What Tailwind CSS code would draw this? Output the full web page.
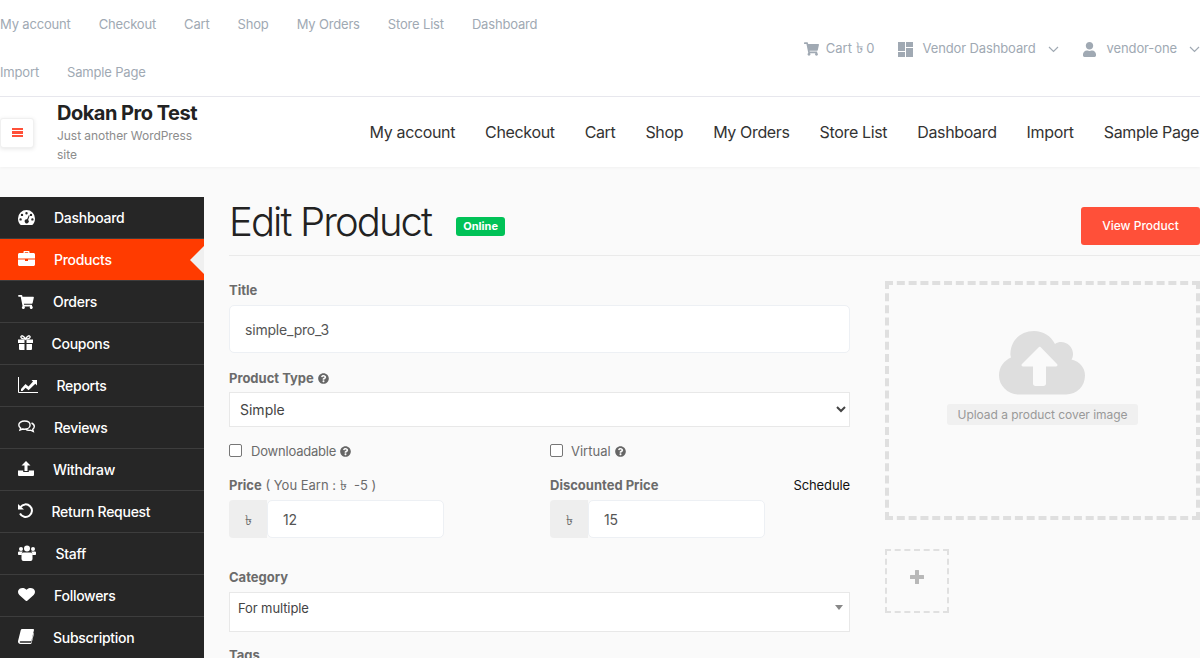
<!DOCTYPE html>
<html lang="en">
<head>
<meta charset="utf-8">
<title>Edit Product</title>
<script src="https://cdn.jsdelivr.net/npm/@tailwindcss/browser@4"></script>
</head>
<body class="bg-[#fafafa] font-['Inter','Noto_Sans',sans-serif] overflow-hidden">
<div class="w-[1200px] h-[658px] overflow-hidden flex flex-col">
  <!-- top bar -->
  <div class="h-[97px] shrink-0 bg-white border-b border-[#e8e8ee] flex items-center justify-between text-[13px] text-[#a0a9b3]">
    <div class="w-[600px] flex flex-wrap gap-x-[28px] tracking-[-0.17px]">
      <a class="h-[48px] leading-[48px]">My account</a><a class="h-[48px] leading-[48px]">Checkout</a><a class="h-[48px] leading-[48px]">Cart</a><a class="h-[48px] leading-[48px]">Shop</a><a class="h-[48px] leading-[48px]">My Orders</a><a class="h-[48px] leading-[48px]">Store List</a><a class="h-[48px] leading-[48px]">Dashboard</a>
      <div class="basis-full h-0"></div>
      <a class="h-[48px] leading-[48px]">Import</a><a class="h-[48px] leading-[48px]">Sample Page</a>
    </div>
    <div class="flex items-center h-[20px] mt-[2px] whitespace-nowrap">
      <svg class="w-[15px] h-[14px] mr-[7px] fill-[#a0a9b3]" viewBox="0 0 576 512"><path d="M528.12 301.319l47.273-208C578.806 78.301 567.391 64 551.99 64H159.208l-9.166-44.81C147.758 8.021 137.93 0 126.529 0H24C10.745 0 0 10.745 0 24v16c0 13.255 10.745 24 24 24h69.883l70.248 343.435C147.325 417.1 136 435.222 136 456c0 30.928 25.072 56 56 56s56-25.072 56-56c0-15.674-6.447-29.835-16.824-40h209.647C430.447 426.165 424 440.326 424 456c0 30.928 25.072 56 56 56s56-25.072 56-56c0-22.172-12.888-41.332-31.579-50.405l5.517-24.276c3.413-15.018-8.002-29.319-23.403-29.319H218.117l-6.545-32h293.145c11.206 0 20.92-7.754 23.403-18.681z"/></svg>
      <span>Cart <span class="text-[15px] leading-[15px]">৳</span> 0</span>
      <svg class="w-[15px] h-[15px] ml-[23px] mr-[10px] fill-[#a0a9b3]" viewBox="0 0 15 15"><rect width="7" height="9"/><rect x="8" width="7" height="5"/><rect y="10" width="7" height="5"/><rect x="8" y="6" width="7" height="9"/></svg>
      <span class="tracking-[-0.12px]">Vendor Dashboard</span>
      <svg class="w-[11px] h-[7px] ml-[12px] stroke-[#a0a9b3] fill-none" viewBox="0 0 11 7"><path d="M1 1l4.500 4.500L10 1" stroke-width="1.2"/></svg>
      <svg class="w-[13px] h-[15px] ml-[24px] mr-[11px] fill-[#a0a9b3]" viewBox="0 0 448 512"><path d="M224 256c70.7 0 128-57.3 128-128S294.7 0 224 0 96 57.3 96 128s57.3 128 128 128zm89.6 32h-16.7c-22.2 10.2-46.9 16-72.9 16s-50.6-5.8-72.9-16h-16.7C60.2 288 0 348.2 0 422.4V464c0 26.5 21.5 48 48 48h352c26.5 0 48-21.5 48-48v-41.6c0-74.2-60.2-134.4-134.4-134.4z"/></svg>
      <span class="tracking-[-0.1px]">vendor-one</span>
      <svg class="w-[11px] h-[7px] ml-[12px] stroke-[#a0a9b3] fill-none" viewBox="0 0 11 7"><path d="M1 1l4.500 4.500L10 1" stroke-width="1.2"/></svg>
    </div>
  </div>
  <!-- site header -->
  <div class="h-[70px] shrink-0 bg-white flex items-center shadow-[0_1px_3px_rgba(0,0,0,0.04)]">
    <button class="w-[34px] h-[30px] ml-0 mt-[1px] bg-white rounded-[3px] border border-[#f0f0f0] shadow-[0_1px_4px_rgba(0,0,0,0.1)] flex flex-col items-center justify-center gap-[1px]">
      <span class="block w-[11px] h-[2.5px] bg-[#ff5039]"></span><span class="block w-[11px] h-[2.5px] bg-[#ff5039]"></span><span class="block w-[11px] h-[2.5px] bg-[#ff5039]"></span>
    </button>
    <div class="ml-[23px] w-[150px]">
      <div class="text-[20px] leading-[24px] font-bold text-[#222] whitespace-nowrap tracking-[-0.5px]">Dokan Pro Test</div>
      <div class="text-[12px] leading-[19px] mt-[1px] text-[#8c8c8c] tracking-[-0.05px]">Just another WordPress site</div>
    </div>
    <nav class="ml-auto flex gap-x-[30px] text-[16px] text-[#333] whitespace-nowrap pr-[1px] tracking-[-0.35px]">
      <a>My account</a><a>Checkout</a><a>Cart</a><a>Shop</a><a>My Orders</a><a>Store List</a><a>Dashboard</a><a>Import</a><a>Sample Page</a>
    </nav>
  </div>
  <!-- body -->
  <div class="flex pt-[30px] flex-1 min-h-0">
    <!-- sidebar -->
    <aside class="w-[204px] shrink-0 bg-[#262626] text-white text-[14px] font-medium tracking-[-0.28px]">
      <a class="h-[42px] flex items-center pl-[18px] border-b border-[#3d3d3d]">
        <svg class="w-[17px] h-[15px] fill-white mr-[19px] shrink-0" viewBox="0 0 17 15"><path fill-rule="evenodd" d="M8.5 0A8.5 8.5 0 0 0 0 8.5c0 2.3.7 4.3 1.9 5.8.3.4.7.7 1.2.7h10.8c.5 0 .9-.3 1.2-.7 1.2-1.5 1.9-3.5 1.9-5.8A8.5 8.5 0 0 0 8.5 0zM8.5 2a1.2 1.2 0 1 1 0 2.4 1.2 1.2 0 0 1 0-2.4zM4 3.7a1.2 1.2 0 1 1 0 2.4 1.2 1.2 0 0 1 0-2.4zM13 3.7a1.2 1.2 0 1 1 0 2.4 1.2 1.2 0 0 1 0-2.4zM2.6 8.2a1.2 1.2 0 1 1 0 2.4 1.2 1.2 0 0 1 0-2.4zM14.4 8.2a1.2 1.2 0 1 1 0 2.4 1.2 1.2 0 0 1 0-2.4zM10.8 5.2l.9.4-1.6 4.4a2 2 0 1 1-3.2 2.3 2 2 0 0 1 2.2-3z"/></svg>
        <span>Dashboard</span>
      </a>
      <a class="relative h-[42px] flex items-center pl-[18px] bg-[#ff3b00] border-b border-[#3d3d3d]">
        <svg class="w-[17px] h-[15px] fill-white mr-[19px] shrink-0 -mt-[2px]" viewBox="0 0 17 15"><path fill-rule="evenodd" d="M5.5 2V1c0-.6.4-1 1-1h4c.6 0 1 .4 1 1v1H15.5c.8 0 1.5.7 1.5 1.500V7.500H0V3.500C0 2.700.7 2 1.500 2zM6.800 1.200V2h3.400v-.8zM0 8.600h7v1.400h3V8.600h7V13.500c0 .8-.7 1.500-1.500 1.500h-14C.7 15 0 14.300 0 13.500z"/></svg>
        <span>Products</span>
        <span class="absolute right-0 top-[7px] w-0 h-0 border-y-[14px] border-y-transparent border-r-[14px] border-r-[#f0f0f0]"></span>
      </a>
      <a class="h-[42px] flex items-center pl-[18px] border-b border-[#3d3d3d]">
        <svg class="w-[16px] h-[14px] fill-white mr-[19px] shrink-0" viewBox="0 0 576 512"><path d="M528.12 301.319l47.273-208C578.806 78.301 567.391 64 551.99 64H159.208l-9.166-44.81C147.758 8.021 137.93 0 126.529 0H24C10.745 0 0 10.745 0 24v16c0 13.255 10.745 24 24 24h69.883l70.248 343.435C147.325 417.1 136 435.222 136 456c0 30.928 25.072 56 56 56s56-25.072 56-56c0-15.674-6.447-29.835-16.824-40h209.647C430.447 426.165 424 440.326 424 456c0 30.928 25.072 56 56 56s56-25.072 56-56c0-22.172-12.888-41.332-31.579-50.405l5.517-24.276c3.413-15.018-8.002-29.319-23.403-29.319H218.117l-6.545-32h293.145c11.206 0 20.92-7.754 23.403-18.681z"/></svg>
        <span>Orders</span>
      </a>
      <a class="h-[42px] flex items-center pl-[18px] border-b border-[#3d3d3d]">
        <svg class="w-[15px] h-[15px] mr-[18.500px] shrink-0 -mt-[2px]" viewBox="0 0 15 15"><path fill="white" d="M0 4.500h6.500V8H0zM8.500 4.500H15V8H8.500zM1 9h5.500v6H2a1 1 0 0 1-1-1zM8.500 9H14v5a1 1 0 0 1-1 1H8.500z"/><path fill="none" stroke="white" stroke-width="1.400" d="M7.500 4C6 1 3.500 0 3 1.500S4.500 4 7.500 4C10.500 4 12.500 3 12 1.500S9 1 7.500 4z"/></svg>
        <span>Coupons</span>
      </a>
      <a class="h-[42px] flex items-center pl-[18px] border-b border-[#3d3d3d]">
        <svg class="w-[20px] h-[16px] mr-[18.500px] shrink-0 -mt-[2px]" viewBox="0 0 20 16"><path fill="none" stroke="white" stroke-width="1" d="M.5 0v15.500H20"/><path fill="white" d="M3 12l4.500-5 3 2.500L15 4.500l-1.500-1.500H19v5.500l-1.700-1.700-6.700 6.500-3-2.500L4.500 14H3z"/></svg>
        <span>Reports</span>
      </a>
      <a class="h-[42px] flex items-center pl-[18px] border-b border-[#3d3d3d]">
        <svg class="w-[17px] h-[15px] mr-[19px] shrink-0" viewBox="0 0 17 15"><g fill="none" stroke="white" stroke-width="1.400"><path d="M6.500 1C3.400 1 .8 2.700.8 5c0 1.200.7 2.200 1.800 3l-.6 2 2.400-1c.7.100 1.300.2 2.100.2 3.100 0 5.600-1.700 5.600-4.200S9.600 1 6.500 1z"/><path d="M13.500 3c1.700.7 2.800 1.900 2.800 3.400 0 1.100-.6 2.100-1.600 2.800l.6 2.300-2.700-1.300c-2 .5-4-.1-5.100-1.100"/></g></svg>
        <span>Reviews</span>
      </a>
      <a class="h-[42px] flex items-center pl-[18px] border-b border-[#3d3d3d]">
        <svg class="w-[16px] h-[15px] fill-white mr-[19px] shrink-0 -mt-[2px]" viewBox="0 0 16 15"><path d="M8 0l4.500 4.500H9.500V10h-3V4.500H3.500zM0 9.500h5.200V11h5.600V9.500H16V14a1 1 0 0 1-1 1H1a1 1 0 0 1-1-1z"/></svg>
        <span>Withdraw</span>
      </a>
      <a class="h-[42px] flex items-center pl-[18px] border-b border-[#3d3d3d]">
        <svg class="w-[15px] h-[15px] mr-[18.500px] shrink-0 -mt-[2px]" viewBox="0 0 15 15"><path fill="none" stroke="white" stroke-width="2" d="M2.500 4A6.300 6.300 0 1 1 2 10.500"/><path fill="white" d="M0 1l6 5.500H0z"/></svg>
        <span>Return Request</span>
      </a>
      <a class="h-[42px] flex items-center pl-[18px] border-b border-[#3d3d3d]">
        <svg class="w-[18px] h-[16px] fill-white mr-[19.500px] shrink-0 -mt-[2px]" viewBox="0 0 18 16"><circle cx="3" cy="4" r="2"/><circle cx="15" cy="4" r="2"/><circle cx="9" cy="3.500" r="3"/><path d="M0 7.500C0 6.700.7 6.500 1.500 6.500h2.500c.3 0 .5.1.7.3C4 7.700 3.500 9 3.500 10H1c-.6 0-1-.4-1-1zM18 7.500c0-.8-.7-1-1.500-1H14c-.3 0-.5.1-.7.3.7.9 1.200 2.200 1.200 3.200H17c.6 0 1-.4 1-1zM5.500 7.500h7c1.200 0 2 1 2 3V14a2 2 0 0 1-2 2h-7a2 2 0 0 1-2-2v-3.500c0-2 .8-3 2-3z"/></svg>
        <span>Staff</span>
      </a>
      <a class="h-[42px] flex items-center pl-[18px] border-b border-[#3d3d3d]">
        <svg class="w-[17px] h-[15px] fill-white mr-[19px] shrink-0 -mt-[2px]" viewBox="0 0 512 512" preserveAspectRatio="none"><path d="M462.3 62.6C407.5 15.9 326 24.3 275.7 76.2L256 96.500l-19.7-20.3C186.100 24.300 104.500 15.900 49.700 62.600c-62.800 53.600-66.100 149.800-9.900 207.900l193.500 199.800c12.500 12.900 32.800 12.900 45.300 0l193.500-199.800c56.300-58.100 53-154.300-9.800-207.900z"/></svg>
        <span>Followers</span>
      </a>
      <a class="h-[42px] flex items-center pl-[18px] border-b border-[#3d3d3d]">
        <svg class="w-[16px] h-[15px] mr-[19px] shrink-0 -mt-[2px]" viewBox="0 0 16 15"><path fill="white" d="M4 0h11c.6 0 1 .4 1 1l-2.500 10.500c-.2.600-.6.800-1.200.8H3c-1 0-1.300.4-1.300.8s.3.700 1.300.7h9.500c.5 0 .7-.3.8-.6L15.500 4l.5.500-2.300 9.300c-.2.800-.8 1.200-1.500 1.200H2.500C1 15 0 14 0 12.800c0-.3 0-.7.100-1L2.800 1C3 .4 3.400 0 4 0z"/></svg>
        <span>Subscription</span>
      </a>
    </aside>
    <!-- main -->
    <main class="flex-1 min-w-0 pl-[25px]">
      <div class="h-[59px] border-b border-[#eaeaea] flex items-start">
        <h1 class="text-[40px] leading-[50px] font-light text-[#222] tracking-[-1.9px]">Edit Product</h1>
        <span class="ml-[25px] mt-[20px] h-[19px] w-[49px] rounded-[3px] bg-[#00c257] text-white text-[11px] leading-[19px] font-bold text-center">Online</span>
        <a class="ml-auto mt-[10px] w-[119px] h-[38px] rounded-[3px] bg-[#ff5039] text-white text-[12px] font-medium leading-[38px] text-center">View Product</a>
      </div>
      <div class="flex">
        <!-- form -->
        <form class="w-[621px] shrink-0 text-[13px] text-[#6b6b6b]">
          <label class="block mt-[26px] h-[16px] leading-[16px] font-bold">Title</label>
          <input class="mt-[7px] block w-full h-[48px] px-[15px] bg-white border border-[#edf0f4] rounded-[5px] text-[14px] text-[#555] outline-none tracking-[-0.2px]" value="simple_pro_3">
          <label class="flex items-center gap-[4px] mt-[17px] h-[16px] leading-[16px] font-bold">Product Type
            <svg class="w-[11px] h-[11px] fill-[#666]" viewBox="0 0 512 512"><path d="M504 256c0 136.997-111.043 248-248 248S8 392.997 8 256C8 119.083 119.043 8 256 8s248 111.083 248 248zM262.655 90c-54.497 0-89.255 22.957-116.549 63.758-3.536 5.286-2.353 12.415 2.715 16.258l34.699 26.310c5.205 3.947 12.621 3.008 16.665-2.122 17.864-22.658 30.113-35.797 57.303-35.797 20.429 0 45.698 13.148 45.698 32.958 0 14.976-12.363 22.667-32.534 33.976C247.128 238.528 216 254.941 216 296v4c0 6.627 5.373 12 12 12h56c6.627 0 12-5.373 12-12v-1.333c0-28.462 83.186-29.647 83.186-106.667 0-58.002-60.165-102-116.531-102zM256 338c-25.365 0-46 20.635-46 46 0 25.364 20.635 46 46 46s46-20.636 46-46c0-25.365-20.635-46-46-46z"/></svg>
          </label>
          <select class="mt-[6px] block w-full h-[35px] px-[6px] bg-white border border-[#e8e8e8] text-[14px] text-[#444]"><option>Simple</option></select>
          <div class="grid grid-cols-[321px_1fr] mt-[15px] h-[16px]">
            <label class="flex items-center">
              <input type="checkbox" class="appearance-none w-[13px] h-[13px] -mt-[3px] rounded-[2px] border border-[#767676] bg-white mr-[9px]">
              <span class="tracking-[-0.2px]">Downloadable</span>
              <svg class="w-[11px] h-[11px] ml-[4px] fill-[#666]" viewBox="0 0 512 512"><path d="M504 256c0 136.997-111.043 248-248 248S8 392.997 8 256C8 119.083 119.043 8 256 8s248 111.083 248 248zM262.655 90c-54.497 0-89.255 22.957-116.549 63.758-3.536 5.286-2.353 12.415 2.715 16.258l34.699 26.310c5.205 3.947 12.621 3.008 16.665-2.122 17.864-22.658 30.113-35.797 57.303-35.797 20.429 0 45.698 13.148 45.698 32.958 0 14.976-12.363 22.667-32.534 33.976C247.128 238.528 216 254.941 216 296v4c0 6.627 5.373 12 12 12h56c6.627 0 12-5.373 12-12v-1.333c0-28.462 83.186-29.647 83.186-106.667 0-58.002-60.165-102-116.531-102zM256 338c-25.365 0-46 20.635-46 46 0 25.364 20.635 46 46 46s46-20.636 46-46c0-25.365-20.635-46-46-46z"/></svg>
            </label>
            <label class="flex items-center">
              <input type="checkbox" class="appearance-none w-[13px] h-[13px] -mt-[3px] rounded-[2px] border border-[#767676] bg-white mr-[8px]">
              <span>Virtual</span>
              <svg class="w-[11px] h-[11px] ml-[4px] fill-[#666]" viewBox="0 0 512 512"><path d="M504 256c0 136.997-111.043 248-248 248S8 392.997 8 256C8 119.083 119.043 8 256 8s248 111.083 248 248zM262.655 90c-54.497 0-89.255 22.957-116.549 63.758-3.536 5.286-2.353 12.415 2.715 16.258l34.699 26.310c5.205 3.947 12.621 3.008 16.665-2.122 17.864-22.658 30.113-35.797 57.303-35.797 20.429 0 45.698 13.148 45.698 32.958 0 14.976-12.363 22.667-32.534 33.976C247.128 238.528 216 254.941 216 296v4c0 6.627 5.373 12 12 12h56c6.627 0 12-5.373 12-12v-1.333c0-28.462 83.186-29.647 83.186-106.667 0-58.002-60.165-102-116.531-102zM256 338c-25.365 0-46 20.635-46 46 0 25.364 20.635 46 46 46s46-20.636 46-46c0-25.365-20.635-46-46-46z"/></svg>
            </label>
          </div>
          <div class="grid grid-cols-[321px_1fr] mt-[19px]">
            <div>
              <div class="h-[16px] leading-[16px]"><b>Price</b> ( You Earn : <span class="text-[14px] leading-[14px]">৳</span> &nbsp;-5 )</div>
              <div class="mt-[7px] flex w-[215px] h-[38px]">
                <span class="w-[38px] shrink-0 bg-[#eeeeee] rounded-l-[4px] flex items-center justify-center text-[14px]">৳</span>
                <input class="flex-1 min-w-0 px-[15px] bg-white border border-[#edf0f4] rounded-[5px] text-[14px] text-[#555] outline-none tracking-[-0.2px]" value="12">
              </div>
            </div>
            <div>
              <div class="h-[16px] leading-[16px] flex justify-between"><b>Discounted Price</b><a class="text-[#111] tracking-[-0.1px]">Schedule</a></div>
              <div class="mt-[7px] flex w-[215px] h-[38px]">
                <span class="w-[38px] shrink-0 bg-[#eeeeee] rounded-l-[4px] flex items-center justify-center text-[14px]">৳</span>
                <input class="flex-1 min-w-0 px-[15px] bg-white border border-[#edf0f4] rounded-[5px] text-[14px] text-[#555] outline-none tracking-[-0.2px]" value="15">
              </div>
            </div>
          </div>
          <label class="block mt-[31px] h-[16px] leading-[16px] font-bold">Category</label>
          <div class="relative mt-[7px] h-[40px] bg-white border border-[#e8e8e8] pl-[8px] pb-[6px] flex items-center text-[#444] tracking-[-0.1px]">
            For multiple
            <span class="absolute right-[6px] top-[12px] w-0 h-0 border-x-[4px] border-x-transparent border-t-[5px] border-t-[#888]"></span>
          </div>
          <label class="block mt-[15px] h-[16px] leading-[16px] font-bold">Tags</label>
        </form>
        <!-- images -->
        <div class="flex-1 min-w-0 pl-[35px] pt-[25px]">
          <div class="h-[239px] border-4 border-dashed border-[#dfdfdf] flex flex-col items-center pt-[46px]">
            <svg class="w-[87px] h-[64px] fill-[#dedede]" viewBox="0 0 87 64"><path fill-rule="evenodd" d="M35 0c9 0 17 5 21 13 2-1.500 4-2 6-2 6.500 0 12 5 12 12 0 2-.5 4-1.500 5.500C81 30.500 86 37 86 44.500 86 55 78 63.500 67 63.500H20C9 63.500 0 55 0 44.500 0 36 5 29.500 12 26.500 11 23 11.500 22 11.500 21 12.500 9 22 0 35 0zM40 16L23 33c-1 1-.3 2.500 1 2.500h10v17c0 1.500 1 2.500 2.500 2.500h8c1.500 0 2.500-1 2.500-2.500v-17h10c1.300 0 2-1.500 1-2.500L41.500 16c-.5-.4-1-.4-1.500 0z"/></svg>
            <div class="mt-[9px] w-[191px] h-[21px] rounded-[3px] bg-[#f0f0f0] text-[12px] leading-[21px] text-[#999] text-center whitespace-nowrap tracking-[-0.05px]">Upload a product cover image</div>
          </div>
          <div class="mt-[29px] w-[64px] h-[64px] border-2 border-dashed border-[#e0e0e0] flex items-center justify-center pb-[8px]">
            <svg class="w-[14px] h-[14px] fill-[#b8b8b8]" viewBox="0 0 14 14"><path d="M5.500 0h3a.5.5 0 0 1 .5.500V5h4.500a.5.5 0 0 1 .5.500v3a.5.5 0 0 1-.5.500H9v4.500a.5.5 0 0 1-.5.500h-3a.5.5 0 0 1-.5-.5V9H.5a.5.5 0 0 1-.5-.5v-3A.5.5 0 0 1 .5 5H5V.5a.5.5 0 0 1 .5-.5z"/></svg>
          </div>
        </div>
      </div>
    </main>
  </div>
</div>
</body>
</html>
